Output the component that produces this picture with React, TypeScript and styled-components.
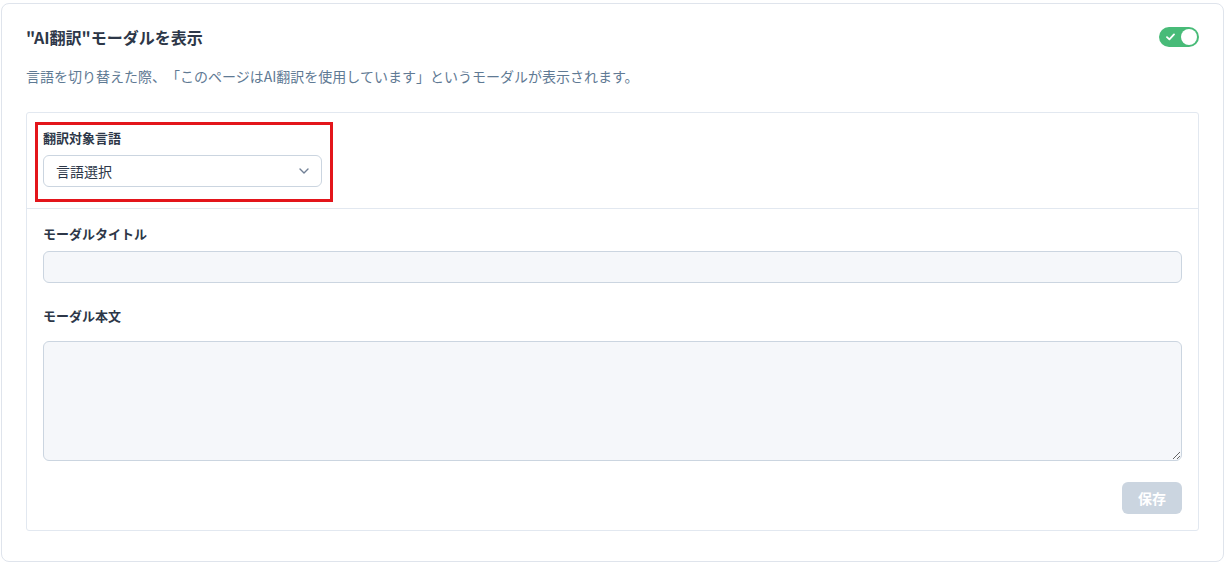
import { FunctionComponent, useState } from 'react';
import styled, { createGlobalStyle } from 'styled-components';

const GlobalStyle = createGlobalStyle`
  html, body {
    margin: 0;
    padding: 0;
    background: #ffffff;
  }
  body {
    font-family: "Noto Sans CJK JP", "Noto Sans", "Liberation Sans", sans-serif;
    color: #2d3748;
    text-spacing-trim: space-all;
  }
  * {
    box-sizing: border-box;
  }
`;

const Page = styled.div`
  padding: 3px 3px 3px 1px;
`;

const Card = styled.section`
  height: 559px;
  border: 1px solid #dfe4ec;
  border-radius: 8px;
  background: #ffffff;
  padding: 22px 24px 0 24px;
`;

const HeaderRow = styled.div`
  display: flex;
  align-items: center;
  justify-content: space-between;
  height: 22px;
`;

const Title = styled.h2`
  margin: 0;
  font-size: 16px;
  font-weight: 700;
  line-height: 22px;
  color: #2d3748;
`;

const ToggleTrack = styled.button<{ $on: boolean }>`
  position: relative;
  width: 40px;
  height: 20px;
  border: none;
  border-radius: 10px;
  padding: 0;
  background: ${(p) => (p.$on ? '#48bb78' : '#cbd5e0')};
  cursor: pointer;
`;

const ToggleKnob = styled.span<{ $on: boolean }>`
  position: absolute;
  top: 2px;
  left: ${(p) => (p.$on ? '22px' : '2px')};
  width: 16px;
  height: 16px;
  border-radius: 50%;
  background: #ffffff;
`;

const ToggleCheck = styled.svg`
  position: absolute;
  left: 7px;
  top: 6px;
`;

const Description = styled.p`
  margin: 18px 0 0 0;
  font-size: 14px;
  line-height: 20px;
  color: #5f7a94;
`;

const Panel = styled.div`
  margin-top: 26px;
  border: 1px solid #e2e8f0;
  border-radius: 3px;
  height: 419px;
  display: flex;
  flex-direction: column;
`;

const LanguageSection = styled.div`
  padding: 9px 8px 6px 8px;
  border-bottom: 1px solid #e2e8f0;
`;

const Highlight = styled.div`
  width: 298px;
  border: 3px solid #e3151b;
  padding: 4px 8px 12px 5px;
`;

const FieldsSection = styled.div`
  flex: 1;
  padding: 16px;
  display: flex;
  flex-direction: column;
`;

const Label = styled.label<{ $gap: number; $top?: number }>`
  display: block;
  font-size: 13px;
  font-weight: 700;
  line-height: 18px;
  color: #2d3748;
  margin-top: ${(p) => p.$top ?? 0}px;
  margin-bottom: ${(p) => p.$gap}px;
`;

const SelectBox = styled.div`
  height: 32px;
  border: 1px solid #cbd5e0;
  border-radius: 6px;
  background: #ffffff;
  display: flex;
  align-items: center;
  justify-content: space-between;
  padding: 0 12px;
  font-size: 14px;
  color: #2d3748;
`;

const TextInput = styled.input`
  display: block;
  width: 100%;
  height: 32px;
  border: 1px solid #cbd5e0;
  border-radius: 6px;
  background: #f5f7fa;
  padding: 0 12px;
  font-family: inherit;
  font-size: 14px;
  outline: none;
`;

const TextArea = styled.textarea`
  display: block;
  width: 100%;
  height: 120px;
  border: 1px solid #cbd5e0;
  border-radius: 6px;
  background: #f5f7fa;
  padding: 8px 12px;
  font-family: inherit;
  font-size: 14px;
  outline: none;
  resize: vertical;
`;

const Footer = styled.div`
  margin-top: auto;
  display: flex;
  justify-content: flex-end;
`;

const SaveButton = styled.button`
  width: 60px;
  height: 32px;
  border: none;
  border-radius: 6px;
  background: #cbd5e0;
  color: #ffffff;
  font-family: inherit;
  font-size: 14px;
  font-weight: 700;
  cursor: not-allowed;
`;

const App: FunctionComponent = () => {
  const [enabled, setEnabled] = useState(true);

  return (
    <Page>
      <GlobalStyle />
      <Card>
        <HeaderRow>
          <Title>"AI翻訳"モーダルを表示</Title>
          <ToggleTrack $on={enabled} onClick={() => setEnabled(!enabled)} aria-label="toggle">
            {enabled && (
              <ToggleCheck width="9" height="8" viewBox="0 0 9 8">
                <path d="M1 4.2 L3.4 6.4 L8 1.4" stroke="#fff" strokeWidth="1.8" fill="none" strokeLinecap="round" strokeLinejoin="round" />
              </ToggleCheck>
            )}
            <ToggleKnob $on={enabled} />
          </ToggleTrack>
        </HeaderRow>
        <Description>
          言語を切り替えた際、「このページはAI翻訳を使用しています」というモーダルが表示されます。
        </Description>
        <Panel>
          <LanguageSection>
            <Highlight>
              <Label $gap={8}>翻訳対象言語</Label>
              <SelectBox>
                <span>言語選択</span>
                <svg width="10" height="6" viewBox="0 0 10 6">
                  <path d="M1 1 L5 5 L9 1" stroke="#718096" strokeWidth="1.4" fill="none" strokeLinecap="round" strokeLinejoin="round" />
                </svg>
              </SelectBox>
            </Highlight>
          </LanguageSection>
          <FieldsSection>
            <Label $gap={8}>モーダルタイトル</Label>
            <TextInput type="text" />
            <Label $gap={16} $top={24}>モーダル本文</Label>
            <TextArea />
            <Footer>
              <SaveButton disabled>保存</SaveButton>
            </Footer>
          </FieldsSection>
        </Panel>
      </Card>
    </Page>
  );
};

export default App;
